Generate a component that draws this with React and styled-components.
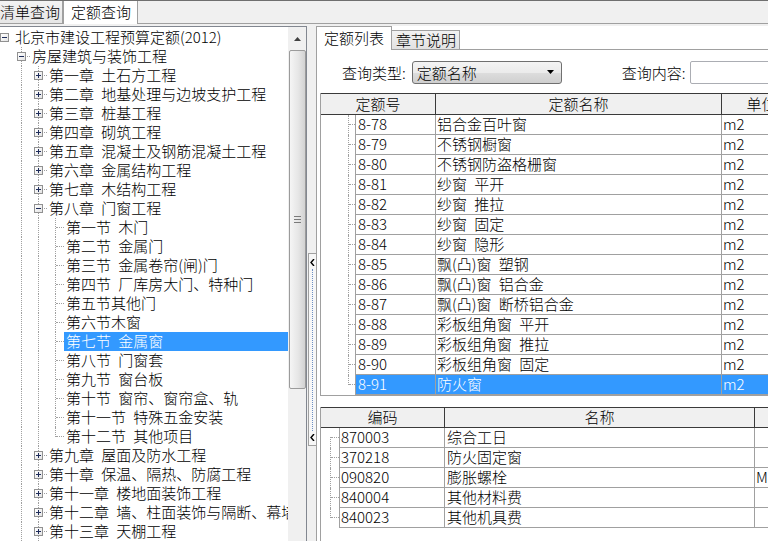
import React from 'react';
import styled, { createGlobalStyle } from 'styled-components';

const GlobalStyle = createGlobalStyle`
  html, body { margin: 0; padding: 0; background: #f0f0f0; }
  body {
    font-family: "Noto Sans CJK SC", "Liberation Sans", sans-serif;
    font-size: 15px;
    font-weight: 300;
    color: #000;
  }
  *, *::before, *::after { box-sizing: border-box; }
`;

const Window = styled.div`
  width: 768px;
  height: 541px;
  overflow: hidden;
  display: flex;
  flex-direction: column;
  background: #f0f0f0;
  border-top: 1px solid #6f6f6f;
`;

const TopTabBar = styled.div`
  display: flex;
  height: 23px;
  flex-shrink: 0;
  border-bottom: 1px solid #a0a0a0;
`;

const TopTab = styled.div`
  width: ${p => p.$w}px;
  padding-left: ${p => p.$pl}px;
  height: ${p => (p.$active ? 23 : 22)}px;
  margin-bottom: ${p => (p.$active ? -1 : 0)}px;
  line-height: 21px;
  white-space: nowrap;
  overflow: hidden;
  background: ${p => (p.$active ? '#fff' : 'linear-gradient(#f3f3f3, #e6e6e6)')};
  border-right: 1px solid #a0a0a0;
  border-left: ${p => (p.$active ? '1px solid #a0a0a0' : 'none')};
`;

const Main = styled.div`
  flex: 1;
  min-height: 0;
  display: flex;
  padding-top: 2px;
`;

/* ---------- left tree pane ---------- */
const LeftPane = styled.div`
  width: 307px;
  flex-shrink: 0;
  display: flex;
  background: #fff;
  border-top: 1px solid #828790;
  border-right: 1px solid #828790;
`;

const TreeViewport = styled.div`
  flex: 1;
  min-width: 0;
  overflow: hidden;
  padding-top: 1px;
`;

const TreeList = styled.div`
  margin-left: -4px;
`;

const TreeRow = styled.div`
  display: flex;
  height: 19px;
`;

const Guide = styled.span`
  position: relative;
  width: 17px;
  height: 19px;
  flex-shrink: 0;
  &::before {
    content: '';
    display: ${p => (p.$v === 'none' ? 'none' : 'block')};
    position: absolute;
    left: 8px;
    top: ${p => (p.$v === 'bottom' ? 9 : 0)}px;
    height: ${p => (p.$v === 'full' ? 19 : 10)}px;
    border-left: 1px dotted #a0a0a0;
  }
  &::after {
    content: '';
    display: ${p => (p.$h ? 'block' : 'none')};
    position: absolute;
    left: 9px;
    right: 0;
    top: 9px;
    border-top: 1px dotted #a0a0a0;
  }
`;

const ExpandBox = styled.span`
  position: absolute;
  left: 4px;
  top: 5px;
  width: 9px;
  height: 9px;
  border: 1px solid #919191;
  background: linear-gradient(135deg, #ffffff, #e4e4e4);
  z-index: 1;
  &::before {
    content: '';
    position: absolute;
    left: 1px;
    top: 3px;
    width: 5px;
    height: 1px;
    background: #1e2c5a;
  }
  &::after {
    content: '';
    display: ${p => (p.$open ? 'none' : 'block')};
    position: absolute;
    left: 3px;
    top: 1px;
    width: 1px;
    height: 5px;
    background: #1e2c5a;
  }
`;

const TreeLabel = styled.span`
  flex: 1;
  height: 19px;
  padding-left: 2px;
  line-height: 17px;
  white-space: nowrap;
  word-spacing: 4px;
  background: ${p => (p.$selected ? '#3399ff' : 'transparent')};
  color: ${p => (p.$selected ? '#fff' : '#000')};
`;

const VScroll = styled.div`
  width: 18px;
  flex-shrink: 0;
  background: #f0f0f0;
  display: flex;
  flex-direction: column;
  align-items: center;
`;

const ScrollButton = styled.div`
  height: 22px;
  width: 100%;
  display: flex;
  align-items: center;
  justify-content: center;
  padding-top: 2px;
`;

const ScrollThumb = styled.div`
  margin-top: 1px;
  width: 17px;
  height: 339px;
  border: 1px solid #9b9b9b;
  border-radius: 2px;
  background: linear-gradient(to right, #f5f5f5, #e6e6e6 55%, #d2d2d2);
  display: flex;
  align-items: center;
  justify-content: center;
`;

/* ---------- splitter ---------- */
const Splitter = styled.div`
  width: 9px;
  flex-shrink: 0;
  padding-top: 227px;
  padding-left: 1px;
`;

const CollapseStrip = styled.div`
  height: 193px;
  border: 1px solid #a0a0a0;
  border-right: none;
  background: #f7f7f7;
  display: flex;
  flex-direction: column;
  align-items: center;
  padding: 5px 0 4px;
`;

const StripDots = styled.div`
  flex: 1;
  margin: 3px 0;
  border-left: 1px dotted #6d8fc4;
`;

/* ---------- right pane ---------- */
const RightPane = styled.div`
  flex: 1;
  min-width: 0;
  display: flex;
  flex-direction: column;
  background: #fff;
  border-left: 1px solid #a0a0a0;
  overflow: hidden;
`;

const TabStrip = styled.div`
  display: flex;
  align-items: flex-end;
  height: 24px;
  flex-shrink: 0;
  border-bottom: 1px solid #a0a0a0;
`;

const PageTab = styled.div`
  width: ${p => p.$w}px;
  padding-left: ${p => p.$pl}px;
  height: ${p => (p.$active ? 24 : 19)}px;
  margin-bottom: ${p => (p.$active ? -1 : 0)}px;
  line-height: ${p => (p.$active ? 22 : 17)}px;
  white-space: nowrap;
  border-top: 1px solid #a0a0a0;
  border-right: 1px solid #a0a0a0;
  background: ${p => (p.$active ? '#fff' : 'linear-gradient(#f2f2f2, #e2e2e2)')};
`;

const TabPage = styled.div`
  flex: 1;
  min-height: 0;
  display: flex;
  flex-direction: column;
  padding-left: 3px;
`;

const QueryRow = styled.div`
  height: 43px;
  flex-shrink: 0;
  display: flex;
  align-items: center;
  padding-left: 22px;
  padding-top: 1px;
`;

const QueryLabel = styled.span`
  white-space: nowrap;
  line-height: 21px;
  margin-left: ${p => p.$ml || 0}px;
`;

const SelectBox = styled.div`
  margin-left: 6px;
  width: 150px;
  height: 23px;
  flex-shrink: 0;
  display: flex;
  align-items: center;
  justify-content: space-between;
  padding: 0 7px 0 4px;
  border: 1px solid #707070;
  border-radius: 3px;
  background: linear-gradient(#f4f4f4, #ebebeb 50%, #dddddd 51%, #cfcfcf);
  line-height: 19px;
`;

const TextInput = styled.input`
  margin-left: 4px;
  width: 200px;
  height: 23px;
  flex-shrink: 0;
  border: 1px solid #abadb3;
  border-radius: 2px;
  background: #fff;
  outline: none;
  padding: 0 3px;
  font: inherit;
`;

const Grid = styled.div`
  flex: ${p => (p.$fill ? 1 : 'none')};
  height: ${p => (p.$h ? `${p.$h}px` : 'auto')};
  margin-top: ${p => p.$mt || 0}px;
  min-height: 0;
  overflow: hidden;
  border-left: 1px solid #a0a0a0;
  border-bottom: ${p => (p.$fill ? 'none' : '1px solid #a0a0a0')};
`;

const GridHeader = styled.div`
  display: flex;
  height: ${p => p.$h}px;
  margin-left: -1px;
  background: #f0f0f0;
  border: 1px solid #3a3a3a;
  border-right: none;
`;

const HeaderCell = styled.div`
  width: ${p => p.$w}px;
  flex-shrink: 0;
  text-align: center;
  line-height: ${p => p.$lh}px;
  white-space: nowrap;
  border-right: 1px solid #3a3a3a;
`;

const GridRow = styled.div`
  display: flex;
  height: 20px;
`;

const GridGuide = styled.span`
  position: relative;
  width: ${p => p.$w}px;
  flex-shrink: 0;
  &::before {
    content: '';
    position: absolute;
    left: ${p => p.$x}px;
    top: ${p => (p.$kind === 'first' ? 9 : 0)}px;
    height: ${p => (p.$kind === 'mid' ? 20 : p.$kind === 'first' ? 11 : 10)}px;
    border-left: 1px dotted #a0a0a0;
  }
  &::after {
    content: '';
    position: absolute;
    left: ${p => p.$x + 1}px;
    right: 0;
    top: 9px;
    border-top: 1px dotted #a0a0a0;
  }
`;

const Cell = styled.div`
  width: ${p => p.$w}px;
  flex-shrink: 0;
  padding-left: ${p => p.$pl || 1}px;
  line-height: 18px;
  white-space: nowrap;
  overflow: hidden;
  word-spacing: 4px;
  border-right: 1px solid #a0a0a0;
  border-bottom: 1px solid #a0a0a0;
  border-left: ${p => (p.$first ? '1px solid #a0a0a0' : 'none')};
  background: ${p => (p.$selected ? '#3399ff' : 'transparent')};
  color: ${p => (p.$selected ? '#fff' : '#000')};
`;

/* ---------- icons ---------- */
const UpArrow = () => (
  <svg width="7" height="4" viewBox="0 0 7 4">
    <path d="M3.5 0 L7 4 L0 4 Z" fill="#404040" />
  </svg>
);

const DownArrow = () => (
  <svg width="7" height="4" viewBox="0 0 7 4">
    <path d="M0 0 L7 0 L3.5 4 Z" fill="#000" />
  </svg>
);

const Grip = () => (
  <svg width="7" height="7" viewBox="0 0 7 7">
    <path d="M0 0.5H7M0 3.5H7M0 6.5H7" stroke="#7a7a7a" strokeWidth="1" />
  </svg>
);

const Chevron = () => (
  <svg width="5" height="7" viewBox="0 0 5 7">
    <path d="M4 0 L1 3.5 L4 7" stroke="#000" strokeWidth="1.4" fill="none" />
  </svg>
);

/* ---------- data ---------- */
const chapters1 = [
  '第一章 土石方工程',
  '第二章 地基处理与边坡支护工程',
  '第三章 桩基工程',
  '第四章 砌筑工程',
  '第五章 混凝土及钢筋混凝土工程',
  '第六章 金属结构工程',
  '第七章 木结构工程',
];
const sections = [
  '第一节 木门',
  '第二节 金属门',
  '第三节 金属卷帘(闸)门',
  '第四节 厂库房大门、特种门',
  '第五节其他门',
  '第六节木窗',
  '第七节 金属窗',
  '第八节 门窗套',
  '第九节 窗台板',
  '第十节 窗帘、窗帘盒、轨',
  '第十一节 特殊五金安装',
  '第十二节 其他项目',
];
const chapters2 = [
  '第九章 屋面及防水工程',
  '第十章 保温、隔热、防腐工程',
  '第十一章 楼地面装饰工程',
  '第十二章 墙、柱面装饰与隔断、幕墙工程',
  '第十三章 天棚工程',
];

const G = (v, h = false) => ({ v, h });

const TREE = [
  { text: '北京市建设工程预算定额(2012)', guides: [G('none')], box: 'open' },
  { text: '房屋建筑与装饰工程', guides: [G('none'), G('full', true)], box: 'open' },
  ...chapters1.map(t => ({ text: t, guides: [G('none'), G('full'), G('full', true)], box: 'closed' })),
  { text: '第八章 门窗工程', guides: [G('none'), G('full'), G('full', true)], box: 'open' },
  ...sections.map((t, i) => ({
    text: t,
    selected: i === 6,
    guides: [G('none'), G('full'), G('full'), G(i === sections.length - 1 ? 'top' : 'full', true)],
  })),
  ...chapters2.map(t => ({ text: t, guides: [G('none'), G('full'), G('full', true)], box: 'closed' })),
];

const QUOTAS = [
  ['8-78', '铝合金百叶窗'],
  ['8-79', '不锈钢橱窗'],
  ['8-80', '不锈钢防盗格栅窗'],
  ['8-81', '纱窗 平开'],
  ['8-82', '纱窗 推拉'],
  ['8-83', '纱窗 固定'],
  ['8-84', '纱窗 隐形'],
  ['8-85', '飘(凸)窗 塑钢'],
  ['8-86', '飘(凸)窗 铝合金'],
  ['8-87', '飘(凸)窗 断桥铝合金'],
  ['8-88', '彩板组角窗 平开'],
  ['8-89', '彩板组角窗 推拉'],
  ['8-90', '彩板组角窗 固定'],
  ['8-91', '防火窗'],
];

const MATERIALS = [
  ['870003', '综合工日', ''],
  ['370218', '防火固定窗', ''],
  ['090820', '膨胀螺栓', 'M8'],
  ['840004', '其他材料费', ''],
  ['840023', '其他机具费', ''],
];

export default function App() {
  return (
    <>
      <GlobalStyle />
      <Window>
        <TopTabBar>
          <TopTab $w={63} $pl={0}>清单查询</TopTab>
          <TopTab $active $w={75} $pl={7}>定额查询</TopTab>
        </TopTabBar>

        <Main>
          <LeftPane>
            <TreeViewport>
              <TreeList>
                {TREE.map((row, i) => (
                  <TreeRow key={i}>
                    {row.guides.map((g, j) => (
                      <Guide key={j} $v={g.v} $h={g.h}>
                        {row.box && j === row.guides.length - 1 && (
                          <ExpandBox $open={row.box === 'open'} />
                        )}
                      </Guide>
                    ))}
                    <TreeLabel $selected={row.selected}>{row.text}</TreeLabel>
                  </TreeRow>
                ))}
              </TreeList>
            </TreeViewport>
            <VScroll>
              <ScrollButton>
                <UpArrow />
              </ScrollButton>
              <ScrollThumb>
                <Grip />
              </ScrollThumb>
            </VScroll>
          </LeftPane>

          <Splitter>
            <CollapseStrip>
              <Chevron />
              <StripDots />
              <Chevron />
            </CollapseStrip>
          </Splitter>

          <RightPane>
            <TabStrip>
              <PageTab $active $w={75} $pl={7}>定额列表</PageTab>
              <PageTab $w={68} $pl={4}>章节说明</PageTab>
            </TabStrip>
            <TabPage>
              <QueryRow>
                <QueryLabel>查询类型:</QueryLabel>
                <SelectBox>
                  <span>定额名称</span>
                  <DownArrow />
                </SelectBox>
                <QueryLabel $ml={60}>查询内容:</QueryLabel>
                <TextInput readOnly value="" />
              </QueryRow>

              <Grid $h={303}>
                <GridHeader $h={22}>
                  <HeaderCell $w={115} $lh={19}>定额号</HeaderCell>
                  <HeaderCell $w={286} $lh={19}>定额名称</HeaderCell>
                  <HeaderCell $w={80} $lh={19}>单位</HeaderCell>
                  <HeaderCell $w={120} $lh={19}>数量</HeaderCell>
                </GridHeader>
                {QUOTAS.map(([code, name], i) => {
                  const sel = i === QUOTAS.length - 1;
                  return (
                    <GridRow key={code}>
                      <GridGuide $w={34} $x={27} $kind={sel ? 'last' : 'mid'} />
                      <Cell $first $w={81} $pl={2} $selected={sel}>{code}</Cell>
                      <Cell $w={286} $selected={sel}>{name}</Cell>
                      <Cell $w={80} $selected={sel}>m2</Cell>
                      <Cell $w={120} $selected={sel}></Cell>
                    </GridRow>
                  );
                })}
              </Grid>

              <Grid $fill $mt={11}>
                <GridHeader $h={21}>
                  <HeaderCell $w={124} $lh={18}>编码</HeaderCell>
                  <HeaderCell $w={310} $lh={18}>名称</HeaderCell>
                  <HeaderCell $w={100} $lh={18}>规格</HeaderCell>
                </GridHeader>
                {MATERIALS.map(([code, name, spec], i) => (
                  <GridRow key={code}>
                    <GridGuide
                      $w={18}
                      $x={9}
                      $kind={i === 0 ? 'first' : i === MATERIALS.length - 1 ? 'last' : 'mid'}
                    />
                    <Cell $first $w={106} $pl={1}>{code}</Cell>
                    <Cell $w={310} $pl={2}>{name}</Cell>
                    <Cell $w={100}>{spec}</Cell>
                  </GridRow>
                ))}
              </Grid>
            </TabPage>
          </RightPane>
        </Main>
      </Window>
    </>
  );
}
